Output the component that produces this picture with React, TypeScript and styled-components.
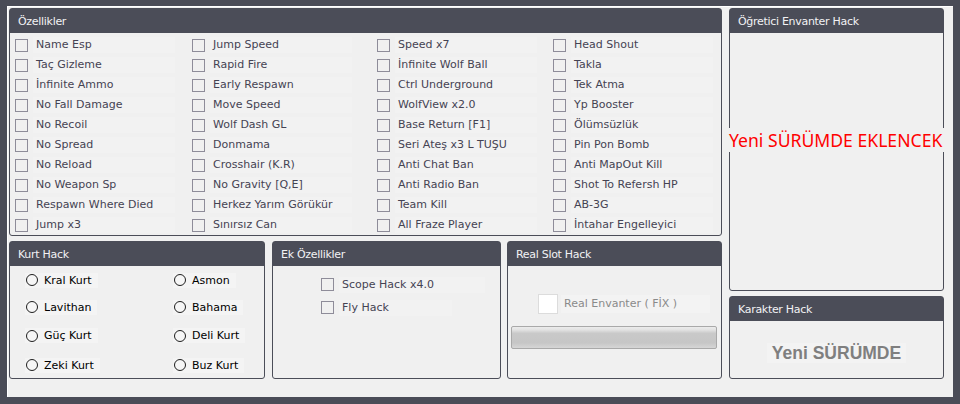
import React from "react";
import styled, { createGlobalStyle } from "styled-components";

const GlobalStyle = createGlobalStyle`
  html, body {
    margin: 0;
    padding: 0;
    background: #4a4c57;
  }
  body {
    font-family: "DejaVu Sans", Verdana, sans-serif;
    font-size: 11px;
    width: 960px;
    height: 404px;
    overflow: hidden;
  }
`;

const features = [
  "Name Esp", "Taç Gizleme", "İnfinite Ammo", "No Fall Damage", "No Recoil",
  "No Spread", "No Reload", "No Weapon Sp", "Respawn Where Died", "Jump x3",
  "Jump Speed", "Rapid Fire", "Early Respawn", "Move Speed", "Wolf Dash GL",
  "Donmama", "Crosshair (K.R)", "No Gravity [Q,E]", "Herkez Yarım Görükür", "Sınırsız Can",
  "Speed x7", "İnfinite Wolf Ball", "Ctrl Underground", "WolfView x2.0", "Base Return [F1]",
  "Seri Ateş x3 L TUŞU", "Anti Chat Ban", "Anti Radio Ban", "Team Kill", "All Fraze Player",
  "Head Shout", "Takla", "Tek Atma", "Yp Booster", "Ölümsüzlük",
  "Pin Pon Bomb", "Anti MapOut Kill", "Shot To Refersh HP", "AB-3G", "İntahar Engelleyici",
];

const wolves = ["Kral Kurt", "Asmon", "Lavithan", "Bahama", "Güç Kurt", "Deli Kurt", "Zeki Kurt", "Buz Kurt"];

const Frame = styled.div`
  box-sizing: border-box;
  margin: 6px 0 0 7px;
  width: 946px;
  height: 391px;
  padding: 1px 0 0 1px;
  background: #f0f0f0;
  border-top: 1px solid #ffffff;
  border-left: 1px solid #ffffff;
  display: flex;
  gap: 7px;
`;

const Column = styled.div<{ $w: number }>`
  width: ${(p) => p.$w}px;
  display: flex;
  flex-direction: column;
  gap: 5px;
`;

const Row = styled.div`
  display: flex;
  height: 138px;
`;

const Panel = styled.div<{ $w?: number; $h: number; $ml?: number }>`
  position: relative;
  box-sizing: border-box;
  width: ${(p) => (p.$w ? `${p.$w}px` : "auto")};
  height: ${(p) => p.$h}px;
  margin-left: ${(p) => p.$ml ?? 0}px;
  border: 1px solid #4b4d58;
  border-radius: 3px;
  background: #f0f0f0;
  display: flex;
  flex-direction: column;
`;

const Header = styled.div`
  height: 24px;
  line-height: 25px;
  padding-left: 8px;
  background: #4b4d58;
  color: #f2f2f4;
  font-size: 11px;
  letter-spacing: -0.3px;
  flex-shrink: 0;
`;

const FeatureGrid = styled.div`
  display: grid;
  grid-template-columns: 177px 185px 176px 1fr;
  grid-template-rows: repeat(10, 20px);
  grid-auto-flow: column;
  padding: 2px 0 0 5px;
`;

const Item = styled.div`
  display: flex;
  align-items: center;
`;

const Box = styled.span`
  box-sizing: border-box;
  width: 13px;
  height: 13px;
  border: 1px solid #8e8c99;
  flex-shrink: 0;
`;

const Label = styled.span<{ $w?: number }>`
  box-sizing: border-box;
  margin-left: 5px;
  padding-left: 3px;
  width: ${(p) => (p.$w ? `${p.$w}px` : "auto")};
  height: 16px;
  line-height: 16px;
  background: #f2f2f2;
  color: #454353;
  white-space: nowrap;
`;

const RadioGrid = styled.div`
  display: grid;
  grid-template-columns: 148px 1fr;
  grid-template-rows: 28px 26px 31px 28px;
  padding-left: 15px;
  align-items: center;
`;

const RadioItem = styled.div`
  display: flex;
  align-items: center;
  justify-self: start;
  height: 15px;
  padding: 0 6px 0 1px;
  background: #f4f4f4;
  color: #000;
`;

const Radio = styled.span`
  box-sizing: border-box;
  width: 12px;
  height: 12px;
  border: 1px solid #1e1e1e;
  border-radius: 50%;
  background: #f6f6f6;
  margin-right: 6px;
`;

const ExtraList = styled.div`
  display: flex;
  flex-direction: column;
  padding: 7px 0 0 48px;
`;

const ExtraItem = styled(Item)`
  height: 23px;
`;

const SlotBody = styled.div`
  padding: 28px 0 0 3px;
  display: flex;
  flex-direction: column;
`;

const SlotItem = styled.div`
  display: flex;
  align-items: center;
  margin-left: 27px;
`;

const WhiteBox = styled.span`
  box-sizing: border-box;
  width: 20px;
  height: 20px;
  border: 1px solid #dcdcdc;
  background: #ffffff;
`;

const GrayLabel = styled.span`
  box-sizing: border-box;
  width: 149px;
  height: 18px;
  line-height: 18px;
  margin-left: 3px;
  padding-left: 3px;
  background: #f3f3f3;
  color: #8a8a8a;
  white-space: nowrap;
`;

const Bar = styled.div`
  box-sizing: border-box;
  margin-top: 12px;
  width: 206px;
  height: 23px;
  border: 1px solid #a9a9a9;
  border-radius: 2px;
  background: linear-gradient(
    to bottom,
    #ececec 0%,
    #e2e2e2 14%,
    #c9c9c9 30%,
    #c6c6c6 75%,
    #d6d6d6 100%
  );
`;

const Banner = styled.div`
  position: absolute;
  left: -1px;
  top: 119px;
  width: 216px;
  height: 24px;
  line-height: 24px;
  background: #f0f0f0;
  color: #ff0000;
  font-family: "Noto Sans", "DejaVu Sans", sans-serif;
  font-size: 17.6px;
  white-space: nowrap;
`;

const SoonBody = styled.div`
  display: flex;
  justify-content: center;
  padding-top: 22px;
`;

const Soon = styled.span`
  padding: 0 5px;
  line-height: 20px;
  background: #f3f3f3;
  color: #7f7f7f;
  font-family: "Liberation Sans", Arial, sans-serif;
  font-weight: bold;
  font-size: 17.5px;
`;

export default function App() {
  return (
    <>
      <GlobalStyle />
      <Frame>
        <Column $w={713}>
          <Panel $h={228}>
            <Header>Özellikler</Header>
            <FeatureGrid>
              {features.map((f) => (
                <Item key={f}>
                  <Box />
                  <Label $w={142}>{f}</Label>
                </Item>
              ))}
            </FeatureGrid>
          </Panel>
          <Row>
            <Panel $w={256} $h={138}>
              <Header>Kurt Hack</Header>
              <RadioGrid>
                {wolves.map((w) => (
                  <RadioItem key={w}>
                    <Radio />
                    {w}
                  </RadioItem>
                ))}
              </RadioGrid>
            </Panel>
            <Panel $w={229} $h={138} $ml={7}>
              <Header>Ek Özellikler</Header>
              <ExtraList>
                <ExtraItem>
                  <Box />
                  <Label $w={146}>Scope Hack x4.0</Label>
                </ExtraItem>
                <ExtraItem>
                  <Box />
                  <Label $w={113}>Fly Hack</Label>
                </ExtraItem>
              </ExtraList>
            </Panel>
            <Panel $w={215} $h={138} $ml={6}>
              <Header>Real Slot Hack</Header>
              <SlotBody>
                <SlotItem>
                  <WhiteBox />
                  <GrayLabel>Real Envanter ( FİX )</GrayLabel>
                </SlotItem>
                <Bar />
              </SlotBody>
            </Panel>
          </Row>
        </Column>
        <Column $w={215}>
          <Panel $h={283}>
            <Header>Öğretici Envanter Hack</Header>
            <Banner>Yeni SÜRÜMDE EKLENCEK</Banner>
          </Panel>
          <Panel $h={83}>
            <Header>Karakter Hack</Header>
            <SoonBody>
              <Soon>Yeni SÜRÜMDE</Soon>
            </SoonBody>
          </Panel>
        </Column>
      </Frame>
    </>
  );
}
